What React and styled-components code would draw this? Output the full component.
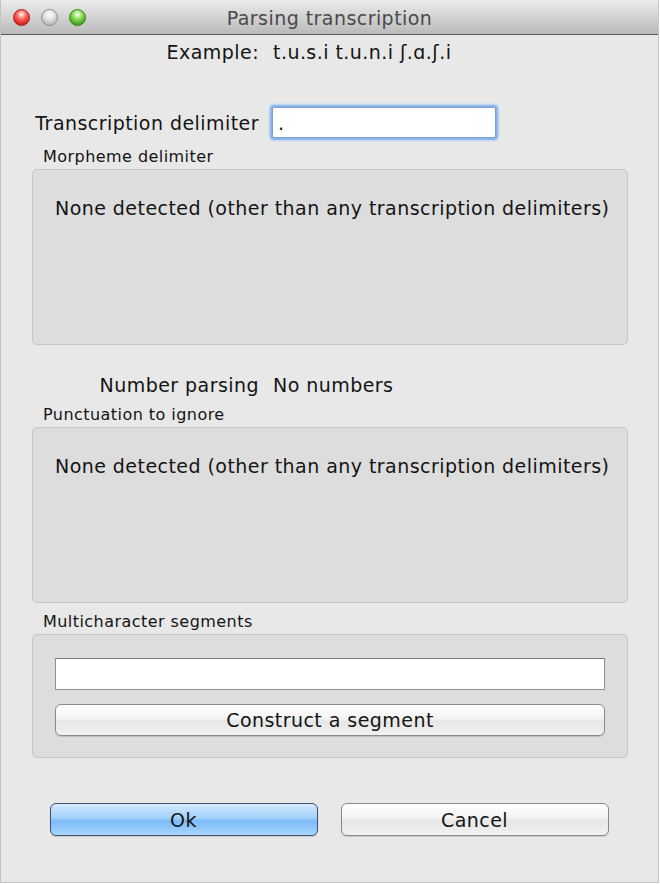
import React from 'react'
import styled, { createGlobalStyle } from 'styled-components'

const GlobalStyle = createGlobalStyle`
    html, body {
        margin: 0;
        padding: 0;
        background: #ffffff;
    }
    body {
        font-family: "DejaVu Sans", "Liberation Sans", sans-serif;
        color: #141414;
        letter-spacing: 0.45px;
    }
`

const Window = styled.div`
    width: 659px;
    height: 883px;
    box-sizing: border-box;
    border: 1px solid #c4c4c4;
    border-top: none;
    background: #e8e8e8;
    display: flex;
    flex-direction: column;
`

const TitleBar = styled.div`
    height: 35px;
    flex: none;
    box-sizing: border-box;
    border-bottom: 1px solid #5c5c5c;
    background: linear-gradient(#ececec, #d3d3d3 50%, #b9b9b9);
    display: grid;
    grid-template-columns: 110px 1fr 110px;
    align-items: center;
`

const Lights = styled.div`
    display: flex;
    gap: 11px;
    padding-left: 12px;
    padding-top: 1px;
`

const Light = styled.span`
    width: 17px;
    height: 17px;
    border-radius: 50%;
    box-sizing: border-box;
    border: 1px solid ${p => p.$edge};
    background: radial-gradient(circle at 50% 30%, #ffffff 0, ${p => p.$tint} 35%, ${p => p.$color} 75%);
`

const Title = styled.div`
    text-align: center;
    font-size: 19px;
    color: #4a4a4a;
    padding-top: 2px;
`

const Body = styled.div`
    display: flex;
    flex-direction: column;
    padding: 7px 30px 0 31px;
`

const FormRow = styled.div`
    display: grid;
    grid-template-columns: 227px 1fr;
    column-gap: 14px;
    align-items: center;
    font-size: 19px;
    line-height: 20px;
    margin-top: ${p => p.$top || 0}px;
`

const RowLabel = styled.div`
    text-align: right;
    white-space: nowrap;
`

const RowValue = styled.div`
    white-space: nowrap;
`

const FocusInput = styled.input`
    width: 224px;
    height: 31px;
    box-sizing: border-box;
    margin-left: -1px;
    border: 1px solid #7b9fcf;
    box-shadow: 0 0 0 2px #8fb7ea, 0 0 2px 3px #b7d2f2;
    border-radius: 2px;
    background: #ffffff;
    font-family: inherit;
    font-size: 19px;
    color: #141414;
    padding: 0 5px;
    outline: none;
`

const GroupLabel = styled.div`
    font-size: 16px;
    line-height: 16px;
    padding-left: 11px;
    margin-top: ${p => p.$top}px;
    margin-bottom: 4px;
`

const Group = styled.div`
    box-sizing: border-box;
    height: ${p => p.$height}px;
    border: 1px solid #c6c6c6;
    border-radius: 5px;
    background: #dddddd;
    padding: ${p => p.$pad};
    display: flex;
    flex-direction: column;
`

const Notice = styled.div`
    font-size: 19px;
    line-height: 20px;
    white-space: nowrap;
`

const SegmentInput = styled.input`
    height: 32px;
    box-sizing: border-box;
    border: 1px solid #8f8f8f;
    border-top-color: #777777;
    background: #ffffff;
    font-family: inherit;
    font-size: 19px;
    padding: 0 6px;
    outline: none;
`

const Button = styled.button`
    height: 33px;
    box-sizing: border-box;
    border-radius: 6px;
    font-family: inherit;
    font-size: 19px;
    letter-spacing: 0.45px;
    color: #141414;
    padding: 0;
    cursor: pointer;
    border: 1px solid ${p => (p.$primary ? '#46506e' : '#8a8a8a')};
    background: ${p =>
        p.$primary
            ? 'linear-gradient(#d3e9fd, #a3d1fa 45%, #7cbbf7 55%, #a8d6fd)'
            : 'linear-gradient(#ffffff, #f3f3f3 45%, #e6e6e6 55%, #f2f2f2)'};
    box-shadow: 0 1px 1px rgba(0, 0, 0, 0.15);
`

const SegmentButton = styled(Button)`
    margin-top: 14px;
    height: 32px;
`

const Footer = styled.div`
    display: flex;
    justify-content: center;
    gap: 23px;
    margin-top: 45px;
    padding-right: 2px;

    & > ${Button} {
        width: 268px;
    }
`

const App = () => {
    return (
        <>
            <GlobalStyle />
            <Window>
                <TitleBar>
                    <Lights>
                        <Light $color="#d7221c" $tint="#ff6a5f" $edge="#a1201a" />
                        <Light $color="#bcbcbc" $tint="#e4e4e4" $edge="#8e8e8e" />
                        <Light $color="#3da520" $tint="#90e05a" $edge="#3c7f1d" />
                    </Lights>
                    <Title>Parsing transcription</Title>
                    <div />
                </TitleBar>

                <Body>
                    <FormRow>
                        <RowLabel>Example:</RowLabel>
                        <RowValue>t.u.s.i t.u.n.i ʃ.ɑ.ʃ.i</RowValue>
                    </FormRow>

                    <FormRow $top={45}>
                        <RowLabel>Transcription delimiter</RowLabel>
                        <FocusInput defaultValue="." />
                    </FormRow>

                    <GroupLabel $top={11}>Morpheme delimiter</GroupLabel>
                    <Group $height={176} $pad="28px 0 0 22px">
                        <Notice>None detected (other than any transcription delimiters)</Notice>
                    </Group>

                    <FormRow $top={30}>
                        <RowLabel>Number parsing</RowLabel>
                        <RowValue>No numbers</RowValue>
                    </FormRow>

                    <GroupLabel $top={12}>Punctuation to ignore</GroupLabel>
                    <Group $height={176} $pad="28px 0 0 22px">
                        <Notice>None detected (other than any transcription delimiters)</Notice>
                    </Group>

                    <GroupLabel $top={11}>Multicharacter segments</GroupLabel>
                    <Group $height={124} $pad="23px 22px 0 22px">
                        <SegmentInput />
                        <SegmentButton>Construct a segment</SegmentButton>
                    </Group>

                    <Footer>
                        <Button $primary>Ok</Button>
                        <Button>Cancel</Button>
                    </Footer>
                </Body>
            </Window>
        </>
    )
}

export default App
